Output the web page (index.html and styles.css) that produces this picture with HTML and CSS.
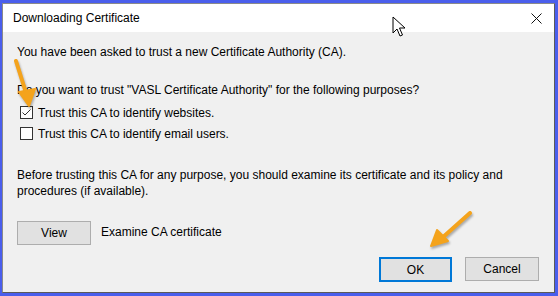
FILE: index.html
```html
<!DOCTYPE html>
<html lang="en">
<head>
  <meta charset="UTF-8" />
  <title>Downloading Certificate</title>
  <link rel="stylesheet" href="styles.css">
</head>
<body>
  <div class="window">
    <div class="titlebar">
      <span class="title">Downloading Certificate</span>
      <svg class="close" width="11" height="11" viewBox="0 0 11 11"><path d="M0.5 0.5 L10.5 10.5 M10.5 0.5 L0.5 10.5" stroke="#111" stroke-width="1"/></svg>
    </div>

    <div class="content">
      <p class="intro">You have been asked to trust a new Certificate Authority (CA).</p>
      <p class="question">Do you want to trust "VASL Certificate Authority" for the following purposes?</p>

      <label class="check first"><span class="box"><svg width="11" height="11" viewBox="0 0 11 11"><path d="M1.5 5.5 L4 8 L9.5 2.5" fill="none" stroke="#333" stroke-width="1"/></svg></span>Trust this CA to identify websites.</label>
      <label class="check"><span class="box"></span>Trust this CA to identify email users.</label>

      <p class="note">Before trusting this CA for any purpose, you should examine its certificate and its policy and procedures (if available).</p>

      <div class="view-row">
        <button class="btn">View</button>
        <span>Examine CA certificate</span>
      </div>

      <div class="actions">
        <button class="btn default">OK</button>
        <button class="btn">Cancel</button>
      </div>
    </div>
  </div>

  <svg class="cursor" width="14" height="22" viewBox="0 0 14 22">
    <path d="M1 1 L1 17 L5 13 L8 20 L10.5 19 L7.5 12 L13 12 Z" fill="#fff" stroke="#000" stroke-width="1" stroke-linejoin="round"/>
  </svg>

  <svg class="arrow arrow-left" width="30" height="52" viewBox="0 0 30 52">
    <path d="M4 3 L15 38" stroke="#f4a31c" stroke-width="4" stroke-linecap="round"/>
    <path d="M7 34 L17 48 L23 31 Z" fill="#f4a31c" stroke="#f4a31c" stroke-width="2" stroke-linejoin="round"/>
  </svg>

  <svg class="arrow arrow-right" width="46" height="40" viewBox="0 0 46 40">
    <path d="M42 3 L14 28" stroke="#f4a31c" stroke-width="4" stroke-linecap="round"/>
    <path d="M9 20 L3 36 L20 31 Z" fill="#f4a31c" stroke="#f4a31c" stroke-width="2" stroke-linejoin="round"/>
  </svg>
</body>
</html>
```

FILE: styles.css
```css
* {
  margin: 0;
  padding: 0;
  box-sizing: border-box;
}

body {
  background: #4a5eec;
  padding: 3px 3px 3px 2px;
  font-family: "Liberation Sans", Arial, sans-serif;
  font-size: 12px;
  color: #000;
  position: relative;
  height: 296px;
  overflow: hidden;
}

.window {
  width: 553px;
  height: 290px;
  background: #f0f0f0;
  border: 1px solid #8a8a8a;
  border-right-color: #5a5a5a;
  border-bottom-color: #5a5a5a;
  display: flex;
  flex-direction: column;
}

.titlebar {
  height: 28px;
  background: #fff;
  display: flex;
  align-items: center;
  justify-content: space-between;
  padding: 0 12px 0 10px;
  flex-shrink: 0;
}

.title {
  font-size: 12px;
  color: #000;
}

.close {
  margin-top: 1px;
}

.content {
  flex: 1;
  padding: 12px 14px 0 14px;
  display: flex;
  flex-direction: column;
}

.intro {
  line-height: 16px;
}

.question {
  margin-top: 22px;
  line-height: 16px;
}

.check {
  display: flex;
  align-items: center;
  gap: 5px;
  height: 21px;
  margin-left: 3px;
}

.check.first {
  margin-top: 4px;
}

.box {
  width: 13px;
  height: 13px;
  border: 1px solid #333;
  background: #fff;
  display: flex;
  align-items: center;
  justify-content: center;
}

.note {
  margin-top: 23px;
  line-height: 16px;
  width: 500px;
}

.view-row {
  display: flex;
  align-items: center;
  gap: 10px;
  margin-top: 22px;
}

.btn {
  width: 74px;
  height: 24px;
  background: #e1e1e1;
  border: 1px solid #adadad;
  font-family: inherit;
  font-size: 12px;
  color: #000;
}

.view-row span {
  margin-top: -2px;
}

.actions {
  display: flex;
  justify-content: flex-end;
  gap: 13px;
  margin-top: 12px;
  padding-right: 1px;
}

.btn.default {
  width: 73px;
  height: 25px;
  border: 2px solid #0078d7;
}

.cursor {
  position: absolute;
  left: 392px;
  top: 16px;
}

.arrow {
  position: absolute;
  filter: drop-shadow(1px 2px 1px rgba(0, 0, 0, 0.3));
}

.arrow-left {
  left: 12px;
  top: 58px;
}

.arrow-right {
  left: 428px;
  top: 210px;
}
```
